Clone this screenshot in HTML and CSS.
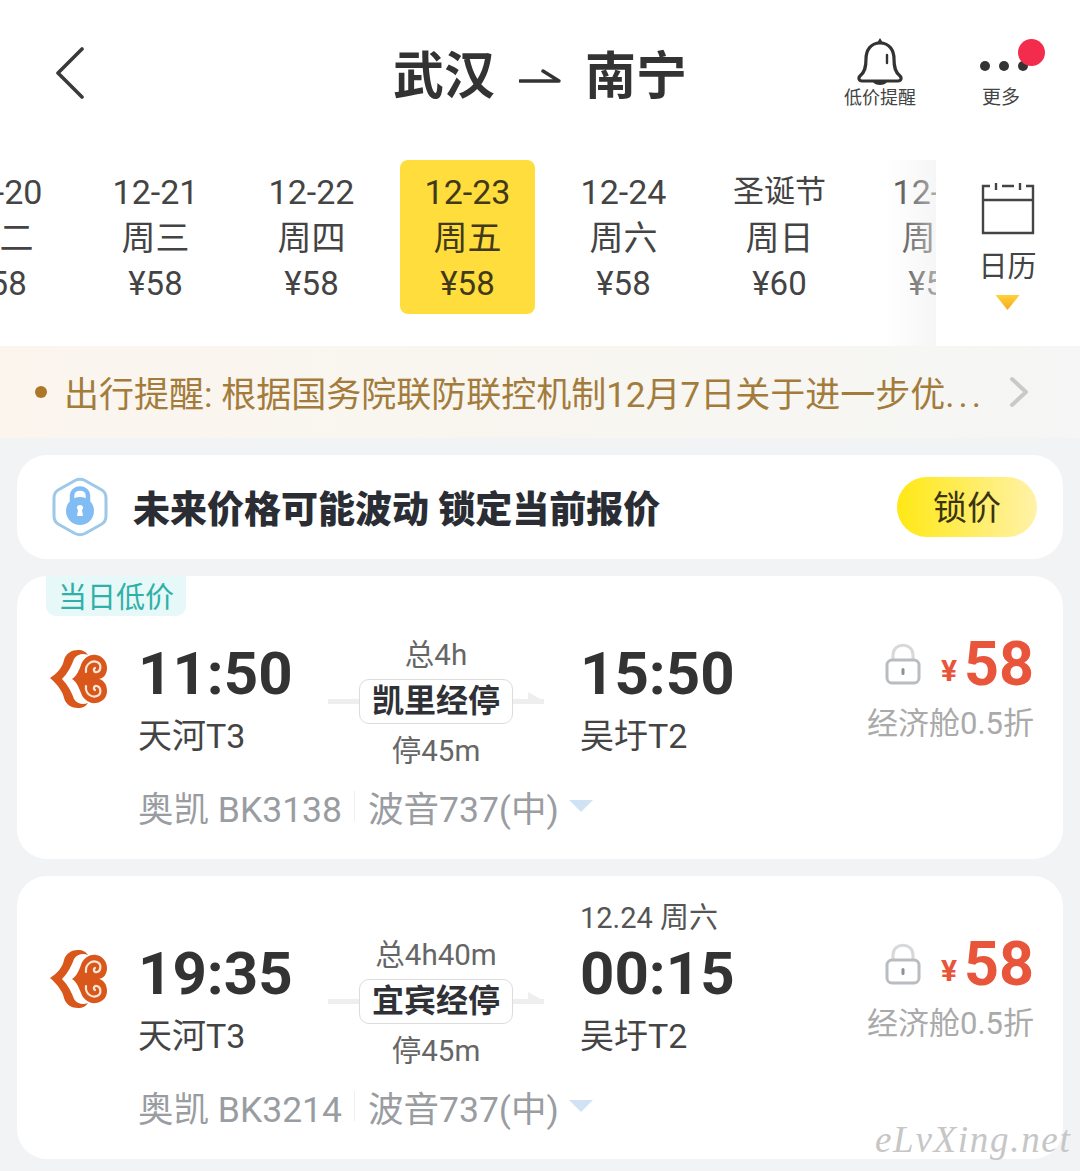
FILE: index.html
```html
<!DOCTYPE html>
<html lang="zh-CN">
<head>
  <meta charset="UTF-8">
  <meta name="viewport" content="width=device-width, initial-scale=1">
  <title>武汉 - 南宁</title>
  <link rel="stylesheet" href="styles.css">
</head>
<body>
  <header class="top-bar">
    <div class="top-left">
      <svg class="back-icon" width="30" height="52" viewBox="0 0 30 52"><path d="M27 2 L3 26 L27 50" fill="none" stroke="#3a3a3a" stroke-width="3.6" stroke-linecap="round" stroke-linejoin="round"/></svg>
    </div>
    <h1 class="route">
      <span>武汉</span>
      <svg width="42" height="16" viewBox="0 0 42 16"><path d="M1 13 H40 L24 3" fill="none" stroke="#333" stroke-width="3.4" stroke-linecap="round" stroke-linejoin="round"/></svg>
      <span>南宁</span>
    </h1>
    <div class="top-actions">
      <div class="action">
        <svg width="46" height="50" viewBox="0 0 46 50"><path d="M23 6 C13 6 9 14 9 22 C9 30 8 35 3 39 C1 41 2 44 5 44 H41 C44 44 45 41 43 39 C38 35 37 30 37 22 C37 14 33 6 23 6 Z" fill="none" stroke="#333" stroke-width="3.2"/><path d="M23 1 L26 6 H20 Z M16 45 H30 C28 49 18 49 16 45 Z" fill="#333"/><path d="M30 18 V26" stroke="#333" stroke-width="2.4" stroke-linecap="round"/></svg>
        <span>低价提醒</span>
      </div>
      <div class="action action-more">
        <div class="dots"><i></i><i></i><i></i></div>
        <b class="red-dot"></b>
        <span>更多</span>
      </div>
    </div>
  </header>

  <section class="date-strip">
    <div class="days">
      <div class="day-list">
        <div class="day"><span>12-20</span><span>周二</span><span>¥58</span></div>
        <div class="day"><span>12-21</span><span>周三</span><span>¥58</span></div>
        <div class="day"><span>12-22</span><span>周四</span><span>¥58</span></div>
        <div class="day active"><span>12-23</span><span>周五</span><span>¥58</span></div>
        <div class="day"><span>12-24</span><span>周六</span><span>¥58</span></div>
        <div class="day"><span class="holiday">圣诞节</span><span>周日</span><span>¥60</span></div>
        <div class="day"><span>12-25</span><span>周一</span><span>¥58</span></div>
      </div>
      <div class="days-fade"></div>
    </div>
    <div class="calendar">
      <svg width="54" height="54" viewBox="0 0 54 54"><path d="M9 5 H2 V52 H52 V5 H45 M15 2 V9 M39 2 V9 M21 5 H33 M2 19 H52" fill="none" stroke="#444" stroke-width="2.4"/></svg>
      <span>日历</span>
      <div class="cal-arrow"></div>
    </div>
  </section>

  <div class="notice">
    <i class="notice-dot"></i>
    <span class="notice-text">出行提醒: 根据国务院联防联控机制12月7日关于进一步优<span class="notice-more">...</span></span>
    <svg width="20" height="32" viewBox="0 0 20 32"><path d="M3 3 L17 16 L3 29" fill="none" stroke="#c9c9c9" stroke-width="4" stroke-linecap="round" stroke-linejoin="round"/></svg>
  </div>

  <main class="list">
    <div class="card lock-card">
      <svg width="58" height="60" viewBox="0 0 58 60">
        <path d="M24 3.5 Q29 1 34 3.5 L50 12.5 Q55 15 55 21 V39 Q55 45 50 47.5 L34 56.5 Q29 59 24 56.5 L8 47.5 Q3 45 3 39 V21 Q3 15 8 12.5 Z" fill="none" stroke="#9cc8ea" stroke-width="3"/>
        <path d="M21 24 V19 C21 9 37 9 37 19 V24" fill="none" stroke="#80bdf5" stroke-width="4.5"/>
        <circle cx="29" cy="34" r="14" fill="#80bdf5"/>
        <path d="M29 28 C32 28 33 31 31 33 L32 39 H26 L27 33 C25 31 26 28 29 28 Z" fill="#fff"/>
      </svg>
      <span class="lock-text">未来价格可能波动 锁定当前报价</span>
      <div class="lock-btn">锁价</div>
    </div>

    <div class="card flight">
      <div class="tag">当日低价</div>
      <div class="flight-main">
        <svg class="logo" width="58" height="62" viewBox="0 0 58 62">
          <path d="M0 30 C8 25 13 18 14 12 C16 5 22 2 28 2 C33 2 36 4 38 7 C33 5 27 6 24 11 C22 17 18 25 12 31 C18 37 22 45 24 51 C27 56 33 57 38 55 C36 58 33 60 28 60 C22 60 16 57 14 50 C13 44 8 37 0 30 Z" fill="#d9571a"/>
          <path d="M22 31 C27 28 29 22 31 17 C33 11 39 6 46 7 C53 8 57 14 57 20 C57 26 54 30 49 31 C54 32 57 37 57 43 C57 49 53 54 46 55 C39 56 33 51 31 45 C29 40 27 34 22 31 Z" fill="#d9571a"/>
          <path d="M36 24 C35 16 42 12 47 14 C52 16 51 23 47 24 C44 25 43 21 45 20 M36 38 C35 46 42 50 47 48 C52 46 51 39 47 38 C44 37 43 41 45 42" fill="none" stroke="#fbe6d8" stroke-width="2.2" stroke-linecap="round"/>
        </svg>
        <div class="endpoint dep">
          <div class="time">11:50</div>
          <div class="station">天河T3</div>
        </div>
        <div class="stopover">
          <div class="stop-note">总4h</div>
          <div class="stop-line">
            <div class="stop-chip">凯里经停</div>
          </div>
          <div class="stop-note stop-wait">停45m</div>
        </div>
        <div class="endpoint arr">
          <div class="time">15:50</div>
          <div class="station">吴圩T2</div>
        </div>
        <div class="price-box">
          <div class="price-row">
            <svg width="36" height="42" viewBox="0 0 36 42"><path d="M8 18 V12 C8 -1 28 -1 28 12 V18" fill="none" stroke="#d6d8da" stroke-width="3"/><rect x="2" y="17" width="32" height="23" rx="5" fill="none" stroke="#b9bcc0" stroke-width="3"/><rect x="16.500" y="25" width="3" height="7" rx="1.500" fill="#8d9094"/></svg>
            <span class="yen">¥</span>
            <span class="amount">58</span>
          </div>
          <div class="cabin">经济舱0.5折</div>
        </div>
      </div>
      <div class="flight-info">
        <span class="flight-no">奥凯 BK3138</span>
        <i class="info-sep"></i>
        <span>波音737(中)</span>
        <i class="info-arrow"></i>
      </div>
    </div>

    <div class="card flight">
      <div class="flight-main">
        <svg class="logo" width="58" height="62" viewBox="0 0 58 62">
          <path d="M0 30 C8 25 13 18 14 12 C16 5 22 2 28 2 C33 2 36 4 38 7 C33 5 27 6 24 11 C22 17 18 25 12 31 C18 37 22 45 24 51 C27 56 33 57 38 55 C36 58 33 60 28 60 C22 60 16 57 14 50 C13 44 8 37 0 30 Z" fill="#d9571a"/>
          <path d="M22 31 C27 28 29 22 31 17 C33 11 39 6 46 7 C53 8 57 14 57 20 C57 26 54 30 49 31 C54 32 57 37 57 43 C57 49 53 54 46 55 C39 56 33 51 31 45 C29 40 27 34 22 31 Z" fill="#d9571a"/>
          <path d="M36 24 C35 16 42 12 47 14 C52 16 51 23 47 24 C44 25 43 21 45 20 M36 38 C35 46 42 50 47 48 C52 46 51 39 47 38 C44 37 43 41 45 42" fill="none" stroke="#fbe6d8" stroke-width="2.2" stroke-linecap="round"/>
        </svg>
        <div class="endpoint dep">
          <div class="time">19:35</div>
          <div class="station">天河T3</div>
        </div>
        <div class="stopover">
          <div class="stop-note">总4h40m</div>
          <div class="stop-line">
            <div class="stop-chip">宜宾经停</div>
          </div>
          <div class="stop-note stop-wait">停45m</div>
        </div>
        <div class="endpoint arr">
          <div class="next-day">12.24 周六</div>
          <div class="time">00:15</div>
          <div class="station">吴圩T2</div>
        </div>
        <div class="price-box">
          <div class="price-row">
            <svg width="36" height="42" viewBox="0 0 36 42"><path d="M8 18 V12 C8 -1 28 -1 28 12 V18" fill="none" stroke="#d6d8da" stroke-width="3"/><rect x="2" y="17" width="32" height="23" rx="5" fill="none" stroke="#b9bcc0" stroke-width="3"/><rect x="16.500" y="25" width="3" height="7" rx="1.500" fill="#8d9094"/></svg>
            <span class="yen">¥</span>
            <span class="amount">58</span>
          </div>
          <div class="cabin">经济舱0.5折</div>
        </div>
      </div>
      <div class="flight-info">
        <span class="flight-no">奥凯 BK3214</span>
        <i class="info-sep"></i>
        <span>波音737(中)</span>
        <i class="info-arrow"></i>
      </div>
    </div>
  </main>

  <div class="watermark">eLvXing.net</div>
</body>
</html>
```

FILE: styles.css
```css
/* Reset some defaults */
body, h1 { margin: 0; padding: 0; }

body {
  position: relative;
  width: 1080px;
  height: 1171px;
  overflow: hidden;
  background: #ffffff;
  font-family: Roboto, "Noto Sans CJK SC", sans-serif;
  color: #333333;
}

/* top bar */
.top-bar {
  display: grid;
  grid-template-columns: 1fr auto 1fr;
  height: 150px;
}

.top-left {
  padding: 47px 0 0 55px;
}

.back-icon {
  display: block;
}

.route {
  display: flex;
  align-items: center;
  gap: 24px;
  height: 150px;
  padding-top: 3px;
  box-sizing: border-box;
  font-size: 51px;
  font-weight: 700;
  line-height: 1;
}

.route svg {
  margin-top: -2px;
}

.top-actions {
  display: flex;
  justify-content: flex-end;
  gap: 41px;
  padding: 37px 39px 0 0;
}

.action {
  position: relative;
  display: flex;
  flex-direction: column;
  align-items: center;
  width: 80px;
  height: 72px;
  font-size: 18px;
  line-height: 22px;
  color: #444444;
}

.action svg {
  display: block;
  flex: none;
}

.action-more {
  font-size: 19px;
}

.dots {
  display: flex;
  gap: 9px;
  height: 50px;
  padding: 24px 0 0 5px;
  box-sizing: border-box;
}

.dots i {
  width: 10px;
  height: 10px;
  border-radius: 50%;
  background: #333333;
}

.red-dot {
  position: absolute;
  left: 57px;
  top: 2px;
  width: 27px;
  height: 27px;
  border-radius: 50%;
  background: #f32b4d;
}

/* date strip */
.date-strip {
  display: flex;
  height: 196px;
}

.days {
  position: relative;
  width: 936px;
  overflow: hidden;
}

.day-list {
  display: flex;
  gap: 21px;
  margin: 10px 0 0 -68px;
}

.day {
  flex: 0 0 135px;
  display: flex;
  flex-direction: column;
  align-items: center;
  height: 154px;
  padding-top: 9px;
  box-sizing: border-box;
  border-radius: 8px;
  font-size: 34px;
  line-height: 46px;
  color: #444444;
}

.day span {
  white-space: nowrap;
}

.day span:last-child {
  font-size: 33px;
}

.day .holiday {
  font-size: 31px;
}

.day.active {
  background: #ffdd3c;
  color: #42391a;
}

.days-fade {
  position: absolute;
  right: 0;
  top: 10px;
  bottom: 0;
  width: 50px;
  background: linear-gradient(90deg, rgba(245,245,245,0), rgba(240,240,240,0.6));
}

.calendar {
  flex: 1;
  display: flex;
  flex-direction: column;
  align-items: center;
  padding: 31px 0 0 0;
  margin-left: -1px;
  font-size: 29px;
  line-height: 40px;
  color: #444444;
}

.calendar svg {
  display: block;
}

.calendar span {
  margin-top: 12px;
}

.cal-arrow {
  width: 24px;
  height: 15px;
  margin-top: 8px;
  background: linear-gradient(180deg, #ffd23c, #f7a81b);
  clip-path: polygon(0 0, 100% 0, 50% 100%);
}

/* notice */
.notice {
  display: flex;
  align-items: center;
  height: 92px;
  padding-left: 35px;
  background: linear-gradient(90deg, #fbf5ee, #f8f6f1 60%, #f5f6f5);
  color: #a37c3c;
}

.notice-dot {
  flex: none;
  width: 12px;
  height: 12px;
  border-radius: 50%;
  background: #ad7628;
}

.notice-text {
  width: 945px;
  margin: -2px 0 0 17px;
  font-size: 35px;
  white-space: nowrap;
}

.notice-more {
  letter-spacing: 4px;
}

/* list */
.list {
  display: flex;
  flex-direction: column;
  gap: 17px;
  height: 733px;
  padding: 17px 17px 0;
  box-sizing: border-box;
  background: #f1f3f5;
}

.card {
  background: #ffffff;
  border-radius: 30px;
}

.lock-card {
  display: flex;
  align-items: center;
  height: 104px;
  padding: 0 26px 0 34px;
  box-sizing: border-box;
}

.lock-text {
  margin-left: 24px;
  font-size: 37px;
  font-weight: 900;
  color: #2a2d33;
  white-space: nowrap;
}

.lock-btn {
  margin-left: auto;
  width: 140px;
  height: 60px;
  border-radius: 30px;
  background: linear-gradient(90deg, #ffe814, #fff2a8);
  font-size: 34px;
  line-height: 62px;
  text-align: center;
  color: #3a3510;
}

.flight {
  position: relative;
  height: 283px;
  padding: 59px 29px 0 33px;
  box-sizing: border-box;
}

.tag {
  position: absolute;
  left: 29px;
  top: 0;
  width: 140px;
  height: 40px;
  border-radius: 0 0 10px 10px;
  background: #e6f8f8;
  color: #2fb1a8;
  font-size: 29px;
  line-height: 44px;
  text-align: center;
}

.flight-main {
  display: flex;
  height: 136px;
}

.logo {
  flex: none;
  display: block;
  margin: 13px 30px 0 0;
}

.endpoint {
  padding-top: 7px;
}

.dep {
  width: 190px;
}

.arr {
  width: 240px;
  margin-left: 36px;
}

.time {
  font-size: 60px;
  font-weight: 700;
  line-height: 64px;
  color: #333333;
}

.station {
  margin-top: 7px;
  font-size: 34px;
  line-height: 46px;
  color: #444444;
  white-space: nowrap;
}

.next-day {
  height: 40px;
  margin: -44px 0 4px;
  font-size: 29px;
  line-height: 40px;
  color: #555555;
}

.stopover {
  flex: 0 0 216px;
  display: flex;
  flex-direction: column;
  align-items: center;
}

.stop-note {
  font-size: 29.500px;
  line-height: 40px;
  color: #666666;
}

.stop-wait {
  margin-top: 7px;
}

.stop-line {
  position: relative;
  display: flex;
  justify-content: center;
  width: 100%;
  margin-top: 4px;
  background: linear-gradient(#eeeeee, #eeeeee) center / 100% 5px no-repeat;
}

.stop-line::after {
  content: "";
  position: absolute;
  right: 0;
  top: 13px;
  border-left: 16px solid #eeeeee;
  border-top: 9px solid transparent;
  border-bottom: 0;
}

.stop-chip {
  width: 154px;
  height: 45px;
  box-sizing: border-box;
  border: 1px solid #dcdcdc;
  border-radius: 10px;
  background: #ffffff;
  font-size: 32px;
  font-weight: 700;
  line-height: 43px;
  text-align: center;
  color: #2f3136;
}

.price-box {
  flex: 1;
  display: flex;
  flex-direction: column;
  align-items: flex-end;
}

.price-row {
  display: flex;
  align-items: center;
  height: 56px;
  margin-top: 1px;
  color: #e9553a;
}

.price-row svg {
  display: block;
}

.yen {
  margin: 12px 0 0 20px;
  font-size: 30px;
  font-weight: 700;
}

.amount {
  margin-left: 7px;
  font-size: 61px;
  font-weight: 700;
  line-height: 56px;
}

.cabin {
  margin-top: 10px;
  font-size: 31px;
  line-height: 44px;
  color: #aaaaaa;
  white-space: nowrap;
}

.flight-info {
  display: flex;
  align-items: center;
  height: 44px;
  margin: 13px 0 0 88px;
  font-size: 35.500px;
  color: #999da1;
  white-space: nowrap;
}

.info-sep {
  width: 1px;
  height: 30px;
  margin: 0 13px 0 12px;
  background: #eeeeee;
}

.info-arrow {
  margin-left: 10px;
  border-top: 12px solid #cfe3f5;
  border-left: 12px solid transparent;
  border-right: 12px solid transparent;
}

.watermark {
  position: absolute;
  left: 875px;
  top: 1118px;
  font-family: "Liberation Serif", serif;
  font-style: italic;
  font-size: 37px;
  letter-spacing: 1.700px;
  color: #c6c6c6;
  white-space: nowrap;
}
```
